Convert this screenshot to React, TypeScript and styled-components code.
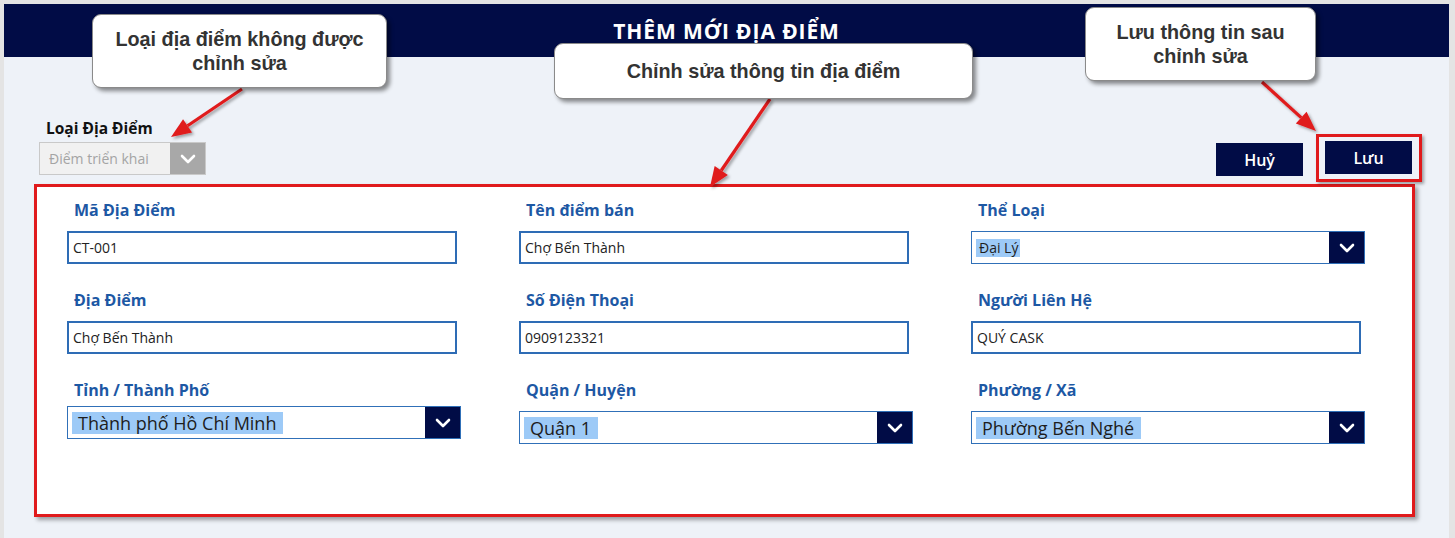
import styled, { createGlobalStyle } from "styled-components";

const NAVY = "#010c46";
const RED = "#e01a1c";

const GlobalStyle = createGlobalStyle`
    html, body {
        margin: 0;
        padding: 0;
        background: #e4e4e4;
        font-family: "Open Sans", "Noto Sans", sans-serif;
    }
    * {
        box-sizing: border-box;
    }
`;

interface Arrow {
    x1: number;
    y1: number;
    x2: number;
    y2: number;
}

const arrows: Arrow[] = [
    { x1: 242, y1: 89, x2: 171, y2: 137 },
    { x1: 770, y1: 99, x2: 710, y2: 187 },
    { x1: 1262, y1: 82, x2: 1316, y2: 131 },
];

interface FieldData {
    label: string;
    value: string;
    kind: "text" | "select";
    big?: boolean;
    tight?: boolean;
}

const fields: FieldData[] = [
    { label: "Mã Địa Điểm", value: "CT-001", kind: "text" },
    { label: "Tên điểm bán", value: "Chợ Bến Thành", kind: "text" },
    { label: "Thể Loại", value: "Đại Lý", kind: "select" },
    { label: "Địa Điểm", value: "Chợ Bến Thành", kind: "text" },
    { label: "Số Điện Thoại", value: "0909123321", kind: "text" },
    { label: "Người Liên Hệ", value: "QUÝ CASK", kind: "text" },
    { label: "Tỉnh / Thành Phố", value: "Thành phố Hồ Chí Minh", kind: "select", big: true, tight: true },
    { label: "Quận / Huyện", value: "Quận 1", kind: "select", big: true },
    { label: "Phường / Xã", value: "Phường Bến Nghé", kind: "select", big: true },
];

function Chevron({ color = "#fff" }: { color?: string }) {
    return (
        <svg width="16" height="10" viewBox="0 0 16 10">
            <polyline points="2,2 8,8 14,2" fill="none" stroke={color} strokeWidth="2.6" strokeLinecap="round" strokeLinejoin="round" />
        </svg>
    );
}

function arrowHead({ x1, y1, x2, y2 }: Arrow) {
    const len = Math.hypot(x2 - x1, y2 - y1);
    const ux = (x2 - x1) / len;
    const uy = (y2 - y1) / len;
    const bx = x2 - ux * 20;
    const by = y2 - uy * 20;
    const px = -uy * 8;
    const py = ux * 8;
    return {
        base: { x: bx, y: by },
        points: `${x2},${y2} ${bx + px},${by + py} ${bx - px},${by - py}`,
    };
}

export default function App() {
    return (
        <>
            <GlobalStyle />
            <Page>
                <Panel>
                    <Header>THÊM MỚI ĐỊA ĐIỂM</Header>
                    <Body>
                        <Toolbar>
                            <TypeGroup>
                                <TypeLabel>Loại Địa Điểm</TypeLabel>
                                <DisabledSelect>
                                    <span>Điểm triển khai</span>
                                    <ChevronBox $disabled>
                                        <Chevron />
                                    </ChevronBox>
                                </DisabledSelect>
                            </TypeGroup>
                            <Actions>
                                <ActionButton $lift>Huỷ</ActionButton>
                                <Highlight>
                                    <ActionButton>Lưu</ActionButton>
                                </Highlight>
                            </Actions>
                        </Toolbar>
                        <FormCard>
                            <FormGrid>
                                {fields.map((f) => (
                                    <Field key={f.label} $tight={f.tight}>
                                        <FieldLabel>{f.label}</FieldLabel>
                                        {f.kind === "text" ? (
                                            <TextBox>{f.value}</TextBox>
                                        ) : (
                                            <SelectBox>
                                                <Selected $big={f.big}>{f.value}</Selected>
                                                <ChevronBox>
                                                    <Chevron />
                                                </ChevronBox>
                                            </SelectBox>
                                        )}
                                    </Field>
                                ))}
                            </FormGrid>
                        </FormCard>
                    </Body>
                </Panel>

                <Overlay width="1455" height="538">
                    <defs>
                        <filter id="shadow" x="-20%" y="-20%" width="140%" height="140%">
                            <feDropShadow dx="2" dy="2" stdDeviation="1.5" floodColor="#000" floodOpacity="0.35" />
                        </filter>
                    </defs>
                    {arrows.map((a, i) => {
                        const head = arrowHead(a);
                        return (
                            <g key={i} filter="url(#shadow)">
                                <line x1={a.x1} y1={a.y1} x2={head.base.x} y2={head.base.y} stroke={RED} strokeWidth="3.2" />
                                <polygon points={head.points} fill={RED} />
                            </g>
                        );
                    })}
                </Overlay>

                <Callout $left={92} $top={14} $width={295} $height={74}>
                    Loại địa điểm không được
                    <br />
                    chỉnh sửa
                </Callout>
                <Callout $left={554} $top={43} $width={419} $height={56}>
                    Chỉnh sửa thông tin địa điểm
                </Callout>
                <Callout $left={1085} $top={7} $width={231} $height={74}>
                    Lưu thông tin sau
                    <br />
                    chỉnh sửa
                </Callout>
            </Page>
        </>
    );
}

const Page = styled.div`
    position: relative;
    width: 1455px;
    height: 538px;
    padding: 4px 6px 0 4px;
    overflow: hidden;
`;

const Panel = styled.div`
    display: flex;
    flex-direction: column;
    height: 534px;
    background: #eef2f8;
`;

const Header = styled.div`
    display: flex;
    align-items: center;
    justify-content: center;
    height: 53px;
    background: ${NAVY};
    color: #fff;
    font-size: 21px;
    font-weight: 700;
    letter-spacing: 0.9px;
    padding-top: 1px;
`;

const Body = styled.div`
    padding-top: 61px;
`;

const Toolbar = styled.div`
    display: flex;
    justify-content: space-between;
    align-items: flex-end;
    padding: 0 27px 0 35px;
`;

const TypeGroup = styled.div`
    display: flex;
    flex-direction: column;
    gap: 4px;
    margin-bottom: 7px;
`;

const TypeLabel = styled.div`
    font-size: 15.5px;
    line-height: 20px;
    font-weight: 700;
    color: #111;
    padding-left: 7px;
`;

const DisabledSelect = styled.div`
    display: flex;
    align-items: stretch;
    justify-content: space-between;
    width: 167px;
    height: 33px;
    background: #f1f1f1;
    border: 1px solid #c9c9c9;

    span {
        display: flex;
        align-items: center;
        padding-left: 9px;
        font-size: 14px;
        color: #a4a4a4;
    }
`;

const ChevronBox = styled.div<{ $disabled?: boolean }>`
    display: flex;
    align-items: center;
    justify-content: center;
    width: 35px;
    background: ${({ $disabled }) => ($disabled ? "#a8a8a8" : NAVY)};
`;

const Actions = styled.div`
    display: flex;
    align-items: flex-end;
    gap: 13px;
`;

const ActionButton = styled.button<{ $lift?: boolean }>`
    width: 87px;
    height: 33px;
    margin-bottom: ${({ $lift }) => ($lift ? "6px" : "0")};
    border: none;
    background: ${NAVY};
    color: #fff;
    font-family: "Open Sans", sans-serif;
    font-size: 16px;
    font-weight: 600;
    padding: 0;
`;

const Highlight = styled.div`
    display: flex;
    border: 3px solid ${RED};
    padding: 4px 7px 5px 6px;
    box-shadow: 2px 2px 3px rgba(0, 0, 0, 0.35);
`;

const FormCard = styled.div`
    margin: 2px 0 0 30px;
    width: 1381px;
    height: 333px;
    background: #fff;
    border: 3px solid ${RED};
    box-shadow: 3px 3px 4px rgba(0, 0, 0, 0.35);
`;

const FormGrid = styled.div`
    display: grid;
    grid-template-columns: repeat(3, 452px);
    row-gap: 25px;
    padding: 12px 0 0 30px;
`;

const Field = styled.div<{ $tight?: boolean }>`
    display: flex;
    flex-direction: column;
    gap: ${({ $tight }) => ($tight ? "5px" : "10px")};
`;

const FieldLabel = styled.div`
    font-size: 16px;
    line-height: 22px;
    font-weight: 700;
    color: #1d58a4;
    padding-left: 7px;
`;

const TextBox = styled.div`
    display: flex;
    align-items: center;
    width: 390px;
    height: 33px;
    padding-left: 4px;
    border: 2px solid #2e6cb5;
    font-size: 14px;
    color: #222;
`;

const SelectBox = styled.div`
    display: flex;
    align-items: stretch;
    justify-content: space-between;
    width: 394px;
    height: 33px;
    border: 1.5px solid #3070b8;
    background: #fff;
`;

const Selected = styled.span<{ $big?: boolean }>`
    align-self: center;
    margin-left: 4px;
    padding: ${({ $big }) => ($big ? "0 7px 0 6px" : "0 2px 0 3px")};
    line-height: ${({ $big }) => ($big ? "22px" : "18px")};
    font-size: ${({ $big }) => ($big ? "18px" : "14px")};
    background: #9dcaf7;
    color: #1d1d1d;
`;

const Overlay = styled.svg`
    position: absolute;
    left: 0;
    top: 0;
    pointer-events: none;
`;

const Callout = styled.div<{ $left: number; $top: number; $width: number; $height: number }>`
    position: absolute;
    left: ${({ $left }) => $left}px;
    top: ${({ $top }) => $top}px;
    width: ${({ $width }) => $width}px;
    height: ${({ $height }) => $height}px;
    display: flex;
    align-items: center;
    justify-content: center;
    text-align: center;
    background: #fff;
    border: 1px solid #8a8a8a;
    border-radius: 9px;
    box-shadow: 3px 3px 4px rgba(0, 0, 0, 0.45);
    font-family: "Liberation Sans", Arial, sans-serif;
    font-size: 19.8px;
    line-height: 24px;
    font-weight: 700;
    color: #333;
`;
